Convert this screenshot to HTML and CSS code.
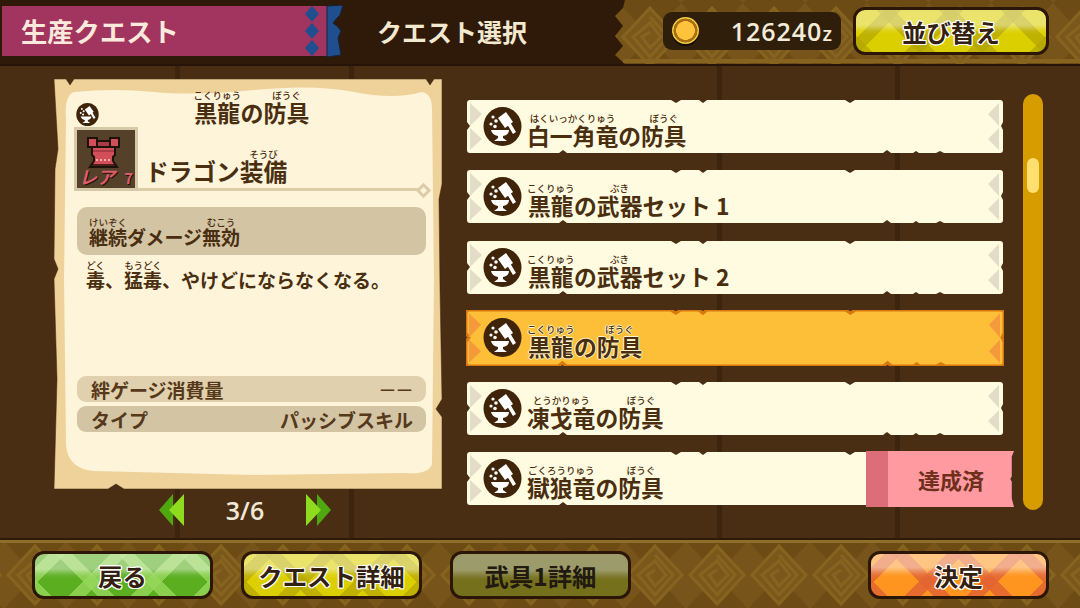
FILE: index.html
```html
<!DOCTYPE html>
<html lang="ja">
<head>
    <meta charset="UTF-8">
    <meta name="viewport" content="width=device-width, initial-scale=1.0">
    <title>クエスト選択</title>
    <link rel="stylesheet" href="styles.css">
</head>
<body>
    <!-- shared shapes -->
    <svg class="defs" width="0" height="0">
        <defs>
            <pattern id="weave" width="62" height="68" patternUnits="userSpaceOnUse" x="4" y="3">
                <rect width="62" height="68" fill="#77541a"/>
                <path d="M0 0H62L31 34ZM0 68H62L31 34Z" fill="#6c4b15"/>
                <path d="M31 5 58 34 31 63 4 34Z" fill="#7a571b" stroke="#86641f" stroke-width="3"/>
                <path d="M31 14 49 34 31 54 14 34 31 20 42 34 31 45 23 34 31 29" fill="none" stroke="#86641f" stroke-width="3"/>
            </pattern>
            <symbol id="hammer" viewBox="0 0 39 39">
                <ellipse cx="19.5" cy="19.5" rx="19" ry="19.5" fill="#3f2409"/>
                <path d="M15 11 23 5 30 15 22 21Z" fill="#fff"/>
                <path d="M24 17 27 15 33 25 30 27Z" fill="#fff"/>
                <path d="M8 23H26Q26 28 20 29V31L24 34H11L15 31V29Q9 28 8 23Z" fill="#fff"/>
                <circle cx="10" cy="10" r="1.6" fill="#fff"/>
                <circle cx="13" cy="14" r="1.8" fill="#fff"/>
                <circle cx="8" cy="17" r="1.6" fill="#fff"/>
                <circle cx="12" cy="19.5" r="1.8" fill="#fff"/>
            </symbol>
            <symbol id="rowshape" viewBox="0 0 536 53" preserveAspectRatio="none">
                <path class="row-edge" d="M3 0H204L209 3 214 0H232L236 3 240 0H378L383 3 388 0H533Q536 0 536 3V22L534 26 536 30V50Q536 53 533 53H477L473 51 469 53H452L449 51 446 53H424L420 50 416 53H100L96 50 92 53H3Q0 53 0 50V30L3 26 0 22V3Q0 0 3 0Z"/>
                <path class="row-tri" d="M3 3 15 14 3 26ZM3 28 15 39 3 50ZM532 3 521 14 532 26ZM532 28 521 39 532 50Z"/>
            </symbol>
        </defs>
    </svg>

    <div class="page">
        <header class="topbar">
            <svg class="bar-art top-art" width="465" height="64">
                <path d="M10 0H465V64H10L0 55 8 46 0 36 8 26 0 16 8 8Z" fill="url(#weave)"/>
                <rect x="8" y="59" width="457" height="4" fill="#86641f"/>
            </svg>
            <div class="banner">
                <span class="banner-label">生産クエスト</span>
                <svg class="banner-end" width="38" height="52" viewBox="0 0 38 52">
                    <rect width="22" height="50" y="1" fill="#a2355f"/>
                    <path d="M7 1 14 9 7 17 0 9ZM7 18 14 26 7 34 0 26ZM7 35 14 43 7 51 0 43Z" fill="#1f4f8f"/>
                    <path d="M22 1 38 0 35 10 32 13 28 18 33 22 36 26 33 33 36 50 22 52Z" fill="#1f4f8f" stroke="#17233a" stroke-width="1"/>
                </svg>
            </div>
            <h1 class="screen-title">クエスト選択</h1>
            <div class="coins">
                <span class="coin"></span>
                <span class="coin-value">126240<small>z</small></span>
            </div>
            <button class="btn btn-yellow btn-sort">並び替え</button>
        </header>

        <main class="main">
            <section class="left-col">
                <div class="parchment">
                    <svg class="parchment-edge" width="388" height="411" viewBox="0 0 388 411">
                        <path d="M0 0H12L16 6 20 0H372L376 6 380 0H388V105L385 120 386 210 388 320 382 330 388 338V410H70L62 405 54 410H0L3 300 0 200 4 190 0 180 1 90 4 70 0 0Z" fill="#eed29a" stroke="#3f2409" stroke-width="0.5"/>
                        <path d="M20 13Q60 9 100 13T200 11 300 13 368 13Q378 15 378 30L380 200 378 385Q375 396 350 394L200 396 40 392Q14 390 12 366L10 200 12 40Q10 17 20 13Z" fill="#fdf4da"/>
                    </svg>
                    <div class="card-head">
                        <svg class="mini-icon" width="23" height="23"><use href="#hammer"/></svg>
                        <h2 class="card-title"><ruby>黒龍<rt>こくりゅう</rt></ruby>の<ruby>防具<rt>ぼうぐ</rt></ruby></h2>
                    </div>
                    <div class="gear-row">
                        <div class="gear-tile">
                            <svg class="armor" width="58" height="58" viewBox="0 0 58 58">
                                <path d="M20 11H33V17H20Z" fill="#a93c46" stroke="#1d120a" stroke-width="2"/>
                                <path d="M11 8H20V17H11ZM33 8H42V17H33Z" fill="#d24f5a" stroke="#1d120a" stroke-width="2"/>
                                <path d="M15 17H38V25L36 27V31L40 37H13L17 31V27L15 25Z" fill="#d24f5a" stroke="#1d120a" stroke-width="2"/>
                                <path d="M16 21H37" stroke="#a93c46" stroke-width="2"/>
                                <path d="M19 30H35" stroke="#f3b0a8" stroke-width="2" stroke-dasharray="2 2"/>
                                <path d="M15 35H38" stroke="#1d120a" stroke-width="1.5"/>
                            </svg>
                            <span class="rare">レア</span><span class="rare-num">7</span>
                        </div>
                        <h3 class="gear-name">ドラゴン<ruby>装備<rt>そうび</rt></ruby></h3>
                        <span class="rule-mark"></span>
                    </div>
                    <div class="skill-box"><ruby>継続<rt>けいぞく</rt></ruby>ダメージ<ruby>無効<rt>むこう</rt></ruby></div>
                    <p class="skill-text"><ruby>毒<rt>どく</rt></ruby>、<ruby>猛毒<rt>もうどく</rt></ruby>、やけどにならなくなる。</p>
                    <div class="stat stat-light"><span>絆ゲージ消費量</span><span class="stat-dash">ーー</span></div>
                    <div class="stat"><span>タイプ</span><span>パッシブスキル</span></div>
                </div>
                <div class="pager">
                    <svg width="26" height="32" viewBox="0 0 26 32">
                        <path d="M14 0 V32 L0 16Z" fill="#4fa80f"/>
                        <path d="M25 0 V32 L10 16Z" fill="#8fdc1e"/>
                    </svg>
                    <span class="page-num">3/6</span>
                    <svg width="26" height="32" viewBox="0 0 26 32">
                        <path d="M12 0 V32 L26 16Z" fill="#4fa80f"/>
                        <path d="M1 0 V32 L16 16Z" fill="#8fdc1e"/>
                    </svg>
                </div>
            </section>

            <section class="quest-list">
                <div class="quest">
                    <svg class="quest-bg"><use href="#rowshape"/></svg>
                    <svg class="quest-icon"><use href="#hammer"/></svg>
                    <span class="quest-name"><ruby>白一角竜<rt>はくいっかくりゅう</rt></ruby>の<ruby>防具<rt>ぼうぐ</rt></ruby></span>
                </div>
                <div class="quest">
                    <svg class="quest-bg"><use href="#rowshape"/></svg>
                    <svg class="quest-icon"><use href="#hammer"/></svg>
                    <span class="quest-name"><ruby>黒龍<rt>こくりゅう</rt></ruby>の<ruby>武器<rt>ぶき</rt></ruby>セット 1</span>
                </div>
                <div class="quest">
                    <svg class="quest-bg"><use href="#rowshape"/></svg>
                    <svg class="quest-icon"><use href="#hammer"/></svg>
                    <span class="quest-name"><ruby>黒龍<rt>こくりゅう</rt></ruby>の<ruby>武器<rt>ぶき</rt></ruby>セット 2</span>
                </div>
                <div class="quest quest-active">
                    <svg class="quest-bg"><use href="#rowshape"/></svg>
                    <svg class="quest-icon"><use href="#hammer"/></svg>
                    <span class="quest-name"><ruby>黒龍<rt>こくりゅう</rt></ruby>の<ruby>防具<rt>ぼうぐ</rt></ruby></span>
                </div>
                <div class="quest">
                    <svg class="quest-bg"><use href="#rowshape"/></svg>
                    <svg class="quest-icon"><use href="#hammer"/></svg>
                    <span class="quest-name"><ruby>凍戈竜<rt>とうかりゅう</rt></ruby>の<ruby>防具<rt>ぼうぐ</rt></ruby></span>
                </div>
                <div class="quest">
                    <svg class="quest-bg"><use href="#rowshape"/></svg>
                    <svg class="quest-icon"><use href="#hammer"/></svg>
                    <span class="quest-name"><ruby>獄狼竜<rt>ごくろうりゅう</rt></ruby>の<ruby>防具<rt>ぼうぐ</rt></ruby></span>
                    <span class="done-tag">達成済</span>
                </div>
            </section>

            <div class="scroll-track"><div class="scroll-thumb"></div></div>
        </main>

        <footer class="bottombar">
            <svg class="bar-art" width="1080" height="70">
                <rect width="1080" height="70" fill="url(#weave)"/>
                <rect width="1080" height="2" fill="#2e1a08"/>
                <rect y="2" width="1080" height="3" fill="#8f6e2a"/>
            </svg>
            <button class="btn btn-green">戻る</button>
            <button class="btn btn-yellow">クエスト詳細</button>
            <button class="btn btn-olive">武具1詳細</button>
            <button class="btn btn-orange">決定</button>
        </footer>
    </div>
</body>
</html>
```

FILE: styles.css
```css
* {
    box-sizing: border-box;
}
body {
    margin: 0;
    font-family: "Noto Sans CJK JP", "Noto Sans", sans-serif;
    color: #4a2e10;
    background: #4a2e14;
}
h1, h2, h3, p {
    margin: 0;
}
ruby {
    ruby-align: center;
}
rt {
    font-size: 9.5px;
    font-weight: 500;
    line-height: 1;
}
.defs {
    position: absolute;
}
.page {
    width: 1080px;
    height: 608px;
    overflow: hidden;
    display: flex;
    flex-direction: column;
}

/* top bar */
.topbar {
    position: relative;
    height: 66px;
    flex: none;
    display: flex;
    align-items: center;
    padding-bottom: 2px;
    background: #2f1a09;
    border-bottom: 2px solid #26140a;
}
.bar-art {
    position: absolute;
    left: 0;
    top: 0;
}
.top-art {
    left: 615px;
}
.banner {
    position: relative;
    margin-left: 2px;
    display: flex;
    width: 341px;
}
.banner-label {
    width: 303px;
    height: 50px;
    margin-top: 1px;
    padding-left: 19px;
    background: #a2355f;
    color: #fbeadb;
    font-size: 26.3px;
    font-weight: 700;
    line-height: 50px;
}
.screen-title {
    position: relative;
    margin-left: 34px;
    color: #f3e8d0;
    font-size: 25px;
    font-weight: 700;
}
.coins {
    position: relative;
    margin-left: auto;
    width: 178px;
    height: 38px;
    padding: 0 8px 0 9px;
    display: flex;
    align-items: center;
    justify-content: space-between;
    background: #2e1e0a;
    border-radius: 9px;
}
.coin {
    width: 27px;
    height: 27px;
    margin-top: -1px;
    border-radius: 50%;
    background: radial-gradient(circle, #ffc23c 0 48%, #a86f10 50% 62%, #f2cb45 64%);
    box-shadow: 0 2px 0 #120a02;
}
.coin-value {
    color: #f4ecd8;
    font-family: "Open Sans", sans-serif;
    font-size: 25px;
    font-weight: 600;
    line-height: 1;
    letter-spacing: 1px;
}
.coin-value small {
    font-size: 20px;
}

/* buttons */
.btn {
    position: relative;
    width: 181px;
    height: 48px;
    padding: 0;
    border: 3px solid #2c1608;
    border-radius: 12px;
    font-family: inherit;
    font-size: 24.4px;
    font-weight: 700;
    color: #33200f;
    text-shadow: 1px 0 #fff, -1px 0 #fff, 0 1px #fff, 0 -1px #fff, 1px 1px #fff, -1px -1px #fff, 1px -1px #fff, -1px 1px #fff;
    cursor: pointer;
}
.btn-sort {
    width: 196px;
    margin-left: 12px;
    margin-right: 31px;
}
.btn-yellow {
    background:
        linear-gradient(rgba(255, 255, 255, .42) 0 36%, rgba(255, 255, 255, .08) 50%, transparent 58%),
        repeating-linear-gradient(45deg, rgba(180, 165, 0, .7) 0 12px, transparent 12px 44px),
        repeating-linear-gradient(-45deg, rgba(180, 165, 0, .7) 0 12px, transparent 12px 44px),
        #dccf00;
}
.btn-green {
    background:
        linear-gradient(rgba(255, 255, 255, .42) 0 36%, rgba(255, 255, 255, .08) 50%, transparent 58%),
        repeating-linear-gradient(45deg, rgba(150, 215, 90, .8) 0 12px, transparent 12px 44px),
        repeating-linear-gradient(-45deg, rgba(150, 215, 90, .8) 0 12px, transparent 12px 44px),
        #5aae1f;
}
.btn-olive {
    color: #221a10;
    text-shadow: none;
    background:
        linear-gradient(rgba(190, 190, 170, .55) 0 38%, rgba(190, 190, 170, .1) 55%, transparent 62%),
        #74701c;
}
.btn-orange {
    margin-left: auto;
    background:
        linear-gradient(rgba(255, 255, 255, .45) 0 32%, rgba(255, 255, 255, .08) 48%, transparent 56%),
        repeating-linear-gradient(45deg, rgba(226, 100, 50, .85) 0 12px, transparent 12px 44px),
        repeating-linear-gradient(-45deg, rgba(226, 100, 50, .85) 0 12px, transparent 12px 44px),
        #ff951e;
}

/* main wood area */
.main {
    flex: 1;
    min-height: 0;
    display: flex;
    align-items: flex-start;
    padding-top: 13px;
    background:
        linear-gradient(90deg, transparent 175px, #3c240f 175px 180px, transparent 180px 349px, #3c240f 349px 354px, transparent 354px 717px, #3c240f 717px 722px, transparent 722px 895px, #3c240f 895px 900px, transparent 900px),
        #4a2e14;
}
.left-col {
    margin-left: 54px;
    width: 388px;
}
.parchment {
    position: relative;
    height: 411px;
    padding: 9px 16px 0 23px;
    display: flex;
    flex-direction: column;
}
.parchment-edge {
    position: absolute;
    left: 0;
    top: 0;
}
.card-head {
    position: relative;
    height: 38px;
    display: grid;
    grid-template-columns: 23px 1fr 23px;
    align-items: end;
}
.mini-icon {
    margin-left: -1px;
}
.card-title {
    grid-column: 2;
    text-align: center;
    font-size: 23px;
    font-weight: 700;
    line-height: 27px;
}
.gear-row {
    position: relative;
    height: 65px;
    margin-left: -3px;
    display: flex;
    align-items: flex-end;
    border-bottom: 3px solid #dccca8;
    margin-right: 6px;
}
.gear-tile {
    position: relative;
    width: 64px;
    height: 64px;
    margin-bottom: -3px;
    border: 3px solid #d6c9a8;
    background: #55412a;
    flex: none;
}
.armor {
    position: absolute;
    left: 0;
    top: 0;
}
.rare {
    position: absolute;
    left: 2px;
    bottom: 1px;
    color: #dc5c68;
    font-size: 18px;
    font-weight: 700;
    line-height: 21px;
    font-style: italic;
    text-shadow: 1px 1px #20120a;
}
.rare-num {
    position: absolute;
    right: 2px;
    bottom: 2px;
    color: #dc5c68;
    font-size: 15px;
    font-weight: 700;
    line-height: 17px;
    text-shadow: 1px 1px #20120a;
}
.gear-name {
    margin-left: 7px;
    font-size: 23.7px;
    font-weight: 700;
    line-height: 33px;
}
.rule-mark {
    position: absolute;
    right: -9px;
    bottom: -8px;
    width: 11px;
    height: 11px;
    transform: rotate(45deg);
    border: 3px solid #dccca8;
    background: #fdf4da;
}
.skill-box {
    position: relative;
    height: 48px;
    margin-top: 16px;
    padding: 13px 0 0 12px;
    background: #d3c4a4;
    border-radius: 10px;
    font-size: 19px;
    font-weight: 700;
    line-height: 33px;
}
.skill-text {
    position: relative;
    height: 121px;
    margin-left: 9px;
    padding-top: 11px;
    font-size: 19px;
    font-weight: 700;
    line-height: 28px;
}
.stat {
    position: relative;
    height: 26px;
    margin-top: 4px;
    padding: 0 13px 0 14px;
    display: flex;
    justify-content: space-between;
    align-items: center;
    background: #d3c4a4;
    border-radius: 9px;
    color: #55391a;
    font-size: 19px;
    font-weight: 700;
}
.stat-light {
    margin-top: 0;
    background: #e0d0ae;
}
.stat-dash {
    font-weight: 400;
    font-size: 17px;
}
.pager {
    height: 40px;
    padding-right: 6px;
    display: flex;
    align-items: center;
    justify-content: center;
    gap: 41px;
}
.page-num {
    color: #f1e9d8;
    font-family: "Open Sans", sans-serif;
    font-size: 25px;
    font-weight: 600;
}

/* quest list */
.quest-list {
    width: 536px;
    margin-left: 25px;
    margin-top: 21px;
    display: flex;
    flex-direction: column;
    gap: 17.4px;
}
.quest {
    position: relative;
    height: 53px;
    padding-left: 16px;
    display: flex;
    align-items: center;
    color: #fffbe0;
}
.quest-bg {
    position: absolute;
    left: 0;
    top: 0;
    width: 536px;
    height: 53px;
    overflow: visible;
}
.row-edge {
    fill: currentColor;
}
.row-tri {
    fill: var(--tri, #e3dcc6);
    stroke: none;
}
.quest-icon {
    position: relative;
    width: 39px;
    height: 39px;
    flex: none;
}
.quest-name {
    position: relative;
    margin-left: 5px;
    padding-top: 18px;
    color: #4a2e10;
    font-size: 22.8px;
    font-weight: 700;
    line-height: 27px;
}
.quest-active {
    --tri: #f59a3c;
    color: #fdbf38;
}
.quest-active .quest-bg {
    left: -1px;
    top: -1px;
    width: 538px;
    height: 56px;
    stroke: #d9780f;
    stroke-width: 3px;
}
.quest-active .quest-name {
    text-shadow: 1px 0 #fff3cc, -1px 0 #fff3cc, 0 1px #fff3cc, 0 -1px #fff3cc;
}
.done-tag {
    position: absolute;
    right: -11px;
    top: -1px;
    width: 148px;
    height: 56px;
    padding-left: 22px;
    display: flex;
    align-items: center;
    justify-content: center;
    background: linear-gradient(90deg, #dd6d79 22px, #ff9aa0 22px);
    clip-path: polygon(0 0, 100% 0, 98.5% 10%, 98.5% 45%, 97.5% 50%, 98.5% 55%, 98.5% 85%, 100% 100%, 0 100%);
    color: #6e2f1c;
    font-size: 22px;
    font-weight: 700;
}
.scroll-track {
    width: 20px;
    height: 416px;
    margin-left: 20px;
    margin-top: 15px;
    padding: 64px 4px 0;
    background: #d69c00;
    border-radius: 10px;
}
.scroll-thumb {
    height: 35px;
    background: #ffdf70;
    border-radius: 6px;
}

/* bottom bar */
.bottombar {
    position: relative;
    height: 70px;
    flex: none;
    display: flex;
    align-items: center;
    gap: 28px;
    padding: 13px 31px 9px 32px;
}
```
